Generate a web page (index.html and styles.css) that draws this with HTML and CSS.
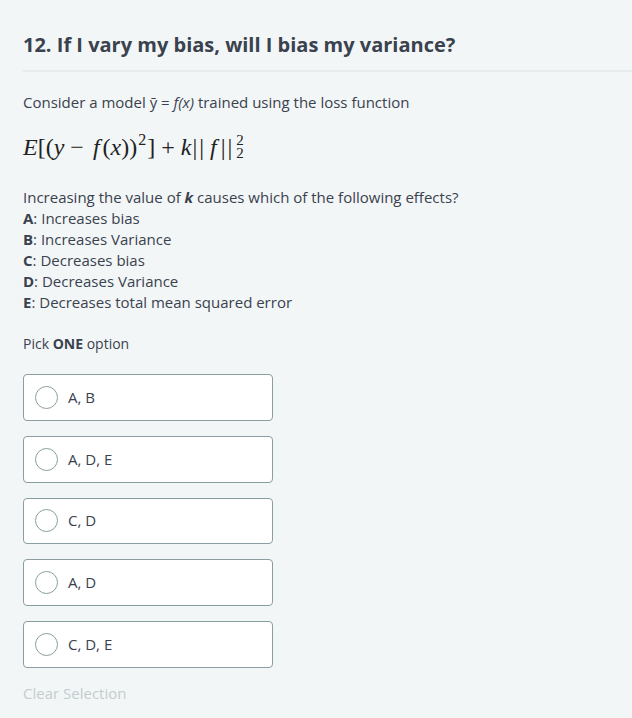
FILE: index.html
```html
<!DOCTYPE html>
<html>
<head>
<meta charset="utf-8">
<link rel="stylesheet" href="styles.css">
</head>
<body>
<div class="page">
  <h1 class="title">12. If I vary my bias, will I bias my variance?</h1>
  <div class="sep"></div>
  <div class="content">
    <p class="intro">Consider a model <span>ȳ</span> = <i>f(x)</i> trained using the loss function</p>
    <div class="math"><span class="mi">E</span><span class="mo">[</span><span class="mo">(</span><span class="mi">y</span><span class="bin">−</span><span class="mi f">f</span><span class="mo">(</span><span class="mi">x</span><span class="mo">)</span><span class="mo">)</span><span class="sup">2</span><span class="mo">]</span><span class="bin">+</span><span class="mi">k</span><span class="mo bar">||</span><span class="mi f">f</span><span class="mo bar">||</span><span class="supsub"><span>2</span><span>2</span></span></div>
    <div class="question">
      <div>Increasing the value of <b><i>k</i></b> causes which of the following effects?</div>
      <div><b>A</b>: Increases bias</div>
      <div><b>B</b>: Increases Variance</div>
      <div><b>C</b>: Decreases bias</div>
      <div><b>D</b>: Decreases Variance</div>
      <div><b>E</b>: Decreases total mean squared error</div>
    </div>
    <p class="pick">Pick <b>ONE</b> option</p>
    <div class="options">
      <label class="option"><span class="radio"></span><span class="label">A, B</span></label>
      <label class="option"><span class="radio"></span><span class="label">A, D, E</span></label>
      <label class="option"><span class="radio"></span><span class="label">C, D</span></label>
      <label class="option"><span class="radio"></span><span class="label">A, D</span></label>
      <label class="option"><span class="radio"></span><span class="label">C, D, E</span></label>
    </div>
    <div class="clear">Clear Selection</div>
  </div>
</div>
</body>
</html>
```

FILE: styles.css
```css
html, body {
  margin: 0;
  padding: 0;
  background: #f3f6f7;
}
body {
  font-family: "Open Sans", "Noto Sans", sans-serif;
  color: #39424e;
}
.page {
  padding: 30px 0 0 23px;
}
.title {
  margin: 0;
  font-size: 20px;
  font-weight: 700;
  line-height: 30px;
  color: #39424e;
}
.sep {
  height: 2px;
  background: #e6ecee;
  margin-top: 10px;
}
.content {
  font-size: 15px;
  line-height: 21px;
}
.intro {
  margin: 20px 0 0;
}
.math {
  font-family: "Liberation Serif", "DejaVu Serif", serif;
  font-size: 24px;
  margin-top: 16px;
  height: 36px;
  line-height: 36px;
  color: #222;
  white-space: nowrap;
}
.math .mi {
  font-style: italic;
}
.math .mi.f {
  margin: 0 3px 0 3px;
}
.math .bar {
  letter-spacing: 2px;
  margin: 0 1px;
}
.math .sup {
  font-size: 16px;
  vertical-align: 10px;
  line-height: 0;
  margin: 0 1px;
}
.math .bin {
  margin: 0 6px;
}
.supsub {
  display: inline-block;
  font-size: 15px;
  line-height: 13px;
  vertical-align: -3px;
  margin-left: 1px;
}
.supsub span {
  display: block;
}
.question {
  margin-top: 22px;
}
.question b {
  font-weight: 700;
}
.pick {
  margin: 20px 0 0;
  font-size: 14px;
}
.pick b {
  font-weight: 700;
}
.options {
  margin-top: 20px;
  display: flex;
  flex-direction: column;
  gap: 15px;
}
.option {
  box-sizing: border-box;
  width: 250px;
  height: 46.8px;
  background: #fff;
  border: 1px solid #8a9ea1;
  border-radius: 4px;
  display: flex;
  align-items: center;
  padding-left: 11px;
}
.radio {
  box-sizing: border-box;
  width: 23px;
  height: 23px;
  border-radius: 50%;
  border: 1px solid #8a9ea1;
  background: #fff;
  margin-right: 10px;
}
.label {
  font-size: 15px;
  color: #39424e;
}
.clear {
  margin-top: 15px;
  color: #c2cdcf;
  font-size: 15px;
}
```
